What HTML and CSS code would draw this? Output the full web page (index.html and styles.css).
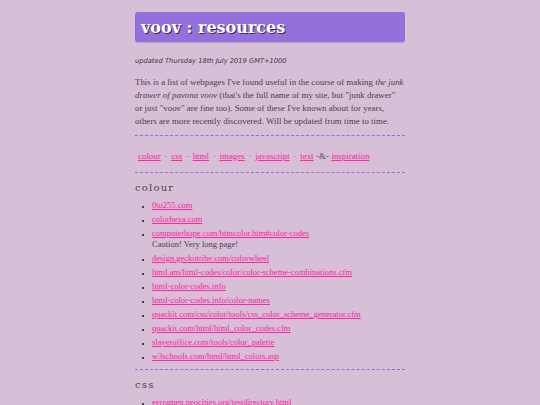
FILE: index.html
```html
<!DOCTYPE html>
<html>
<head>
<meta charset="utf-8">
<title>voov : resources</title>
<link rel="stylesheet" href="styles.css">
</head>
<body>
<div class="page">
  <h1 class="title">voov : resources</h1>
  <p class="updated">updated Thursday 18th July 2019 GMT+1000</p>
  <p class="intro">This is a list of webpages I've found useful in the course of making <em>the junk drawer of pavona voov</em> (that's the full name of my site, but "junk drawer" or&nbsp;just "voov" are fine too). Some of these I've known about for years, others are more recently discovered. Will be updated from time to time.</p>
  <hr class="rule">
  <nav class="nav">
    <a href="#colour">colour</a><span class="sep">·</span><a href="#css">css</a><span class="sep">·</span><a href="#html">html</a><span class="sep">·</span><a href="#images">images</a><span class="sep">·</span><a href="#javascript">javascript</a><span class="sep">·</span><a href="#text">text</a><span class="sep amp">-&amp;-</span><a href="#inspiration">inspiration</a>
  </nav>
  <hr class="rule">
  <h2 class="section" id="colour">colour</h2>
  <ul class="links">
    <li><a href="#">0to255.com</a></li>
    <li><a href="#">colorhexa.com</a></li>
    <li><a href="#">computerhope.com/htmcolor.htm#color-codes</a><br>Caution! Very long page!</li>
    <li><a href="#">design.geckotribe.com/colorwheel</a></li>
    <li><a href="#">html.am/html-codes/color/color-scheme-combinations.cfm</a></li>
    <li><a href="#">html-color-codes.info</a></li>
    <li><a href="#">html-color-codes.info/color-names</a></li>
    <li><a href="#">quackit.com/css/color/tools/css_color_scheme_generator.cfm</a></li>
    <li><a href="#">quackit.com/html/html_color_codes.cfm</a></li>
    <li><a href="#">slayeroffice.com/tools/color_palette</a></li>
    <li><a href="#">w3schools.com/html/html_colors.asp</a></li>
  </ul>
  <hr class="rule">
  <h2 class="section" id="css">css</h2>
  <ul class="links">
    <li><a href="#">eerramen.neocities.org/testdirectory.html</a></li>
  </ul>
</div>
</body>
</html>
```
FILE: styles.css
```css
html, body {
  margin: 0;
  padding: 0;
  background: #d8bfd8;
}
body {
  font-family: "Liberation Serif", "Times New Roman", serif;
  font-size: 8.9px;
  color: #4a4048;
}
.page {
  width: 270px;
  margin: 0 auto;
  padding-top: 12px;
}
.title {
  margin: 0;
  background: #9370db;
  border-radius: 3px;
  height: 30px;
  box-sizing: border-box;
  padding: 6px 6px 0;
  font-family: "DejaVu Serif", Georgia, serif;
  font-size: 16px;
  line-height: 20px;
  font-weight: bold;
  color: #fff;
  text-shadow: 1px 1px 0 #3a2a50;
  box-shadow: 0 1px 1px rgba(0,0,0,0.15);
}
.updated {
  margin: 14px 0 0;
  font-family: "DejaVu Sans", Verdana, sans-serif;
  font-style: italic;
  font-size: 6.7px;
  line-height: 10px;
  color: #3a3038;
}
.intro {
  margin: 10px 0 0;
  line-height: 13px;
}
.rule {
  border: 0;
  border-top: 1px dashed #9370db;
  margin: 7px 0 0;
  height: 0;
}
a {
  color: #e8339b;
  text-shadow: 0 0 2px #ff9ad6;
}
.nav {
  padding: 14px 0 0 3px;
  height: 15px;
  line-height: 12px;
}
.sep {
  margin: 0 3.8px;
  color: #5a4a58;
}
.amp {
  margin: 0 2.5px;
}
.section {
  margin: 8px 0 0;
  font-family: "DejaVu Serif", Georgia, serif;
  font-size: 10px;
  line-height: 14px;
  font-weight: normal;
  letter-spacing: 1.2px;
  color: #4a4048;
}
.links {
  margin: 5px 0 0;
  padding: 0 0 0 17px;
  list-style: square;
  font-size: 8.5px;
}
.links li {
  line-height: 11px;
  margin-bottom: 3px;
}
.links li::marker {
  font-size: 6px;
}
```
